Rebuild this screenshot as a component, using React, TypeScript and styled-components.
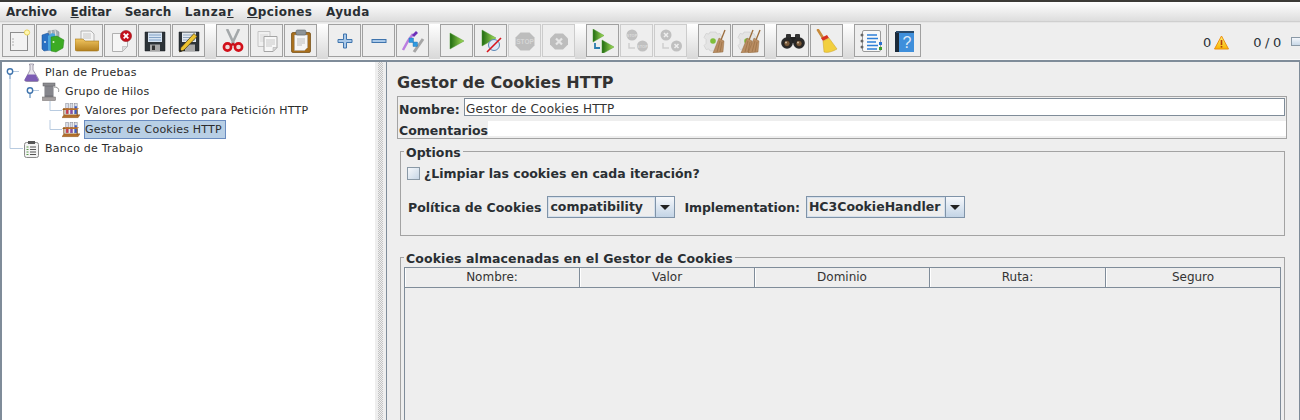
import React from "react";
import styled, { createGlobalStyle } from "styled-components";

const GlobalStyle = createGlobalStyle`
  html, body { margin: 0; padding: 0; background: #eeeeee; }
  body { font-family: "DejaVu Sans", sans-serif; color: #222; overflow: hidden; }
`;

const Page = styled.div`
  width: 1300px;
  height: 420px;
  display: flex;
  flex-direction: column;
  overflow: hidden;
  background: #eeeeee;
`;

const TopStrip = styled.div`
  height: 2px;
  background: #3c3b37;
  flex: none;
`;

const MenuBar = styled.div`
  height: 20px;
  flex: none;
  display: flex;
  align-items: center;
  padding: 1px 0 0 6px;
  gap: 13.5px;
  background: linear-gradient(#ffffff, #dddddd);
  border-bottom: 1px solid #cfcfcf;
  box-sizing: border-box;
  font-weight: 700;
  font-size: 12px;
  color: #2a2f33;
`;

const MenuItem = styled.span<{ $spacing?: number }>`
  letter-spacing: ${(p) => p.$spacing ?? 0}px;
`;

const Mnemonic = styled.span`
  text-decoration: underline;
`;

const ToolBar = styled.div`
  height: 38px;
  flex: none;
  display: flex;
  align-items: flex-start;
  padding: 1px 0 0 2px;
  box-sizing: border-box;
  border-top: 1px solid #e6e6e6;
  border-bottom: 1px solid #f8f8f8;
`;

const ToolGroup = styled.div`
  display: flex;
  gap: 1px;
`;

const ToolSeparator = styled.div`
  width: 11px;
  height: 35px;
  background: linear-gradient(#ffffff, #d8d8d8);
`;

const ToolButton = styled.div<{ $off?: boolean }>`
  width: 33px;
  height: 33px;
  box-sizing: border-box;
  display: flex;
  align-items: center;
  justify-content: center;
  background: #eeeeee;
  border: 1px solid ${(p) => (p.$off ? "#cccccc" : "#a0a0a0")};
`;

const StatusArea = styled.div`
  margin-left: auto;
  display: flex;
  align-items: center;
  height: 37px;
  font-size: 13px;
  color: #2a3138;
`;

const WarnCount = styled.span`
  margin-right: 3px;
`;

const ThreadCount = styled.span`
  margin-left: 24px;
  letter-spacing: -0.3px;
`;

const LogToggle = styled.div`
  width: 10px;
  height: 9px;
  margin-left: 10px;
  margin-right: -1px;
  margin-top: -2px;
  border: 1px solid #8a99a6;
  box-sizing: border-box;
  background: linear-gradient(#f4f7fb, #c8d8e8);
`;

const Workspace = styled.div`
  flex: 1;
  display: flex;
  min-height: 0;
  border-top: 2px solid #7f8c99;
`;

const TreePane = styled.div`
  width: 375px;
  flex: none;
  box-sizing: border-box;
  background: #ffffff;
  border-left: 2px solid #7f8c99;
  padding-top: 1px;
`;

const TreeRow = styled.div`
  height: 19px;
  display: flex;
  align-items: center;
  font-size: 11px;
  color: #2b2b2b;
  letter-spacing: 0.22px;
`;

const TreeLabel = styled.span<{ $selected?: boolean }>`
  height: 19px;
  line-height: 17px;
  box-sizing: border-box;
  padding: ${(p) => (p.$selected ? "0 3px 0 0" : "0 1px")};
  margin-left: ${(p) => (p.$selected ? "4px" : "3px")};
  border: 1px solid ${(p) => (p.$selected ? "#6a8cc0" : "transparent")};
  background: ${(p) => (p.$selected ? "#b8cfe5" : "transparent")};
  white-space: nowrap;
`;

const Splitter = styled.div`
  width: 11px;
  flex: none;
  box-sizing: border-box;
  padding-left: 3px;
  background: #eeeeee;
  &::before {
    content: "";
    display: block;
    width: 5px;
    height: 100%;
    background-image: repeating-conic-gradient(#c4c4c4 0 25%, #eeeeee 0 50%);
    background-size: 2px 2px;
  }
`;

const EditorPane = styled.div`
  flex: 1;
  min-width: 0;
  box-sizing: border-box;
  border-left: 1px solid #7f8c99;
  border-right: 1px solid #7f8c99;
  padding: 0 12px 0 10px;
  background: #eeeeee;
`;

const PaneTitle = styled.div`
  height: 34px;
  padding-top: 11px;
  box-sizing: border-box;
  font-size: 16px;
  line-height: 20px;
  font-weight: 700;
  color: #333333;
`;

const NameBox = styled.div`
  height: 43px;
  box-sizing: border-box;
  border: 1px solid #a3a3a3;
  width: 890px;
`;

const NameRow = styled.div`
  display: flex;
  align-items: center;
  height: 19px;
  padding: 1px 1px 0 1px;
  box-sizing: border-box;
`;

const FieldLabel = styled.span`
  font-size: 12.5px;
  font-weight: 700;
  color: #2a2f33;
  white-space: nowrap;
`;

const NameLabel = styled(FieldLabel)`
  padding-top: 5px;
  width: 65px;
`;

const CommentLabel = styled(FieldLabel)`
  line-height: 19px;
`;

const NameInput = styled.div`
  flex: 1;
  height: 18px;
  box-sizing: border-box;
  background: #ffffff;
  border: 1px solid #7f8c99;
  font-size: 12px;
  letter-spacing: 0.2px;
  line-height: 21px;
  padding-left: 1px;
  color: #333333;
`;

const CommentRow = styled.div`
  display: flex;
  align-items: stretch;
  height: 15px;
  margin-top: 5px;
  padding-left: 1px;
`;

const CommentArea = styled.div`
  flex: 1;
  background: #ffffff;
`;

const FieldGroup = styled.fieldset<{ $height: number; $open?: boolean }>`
  margin: 0 0 0 3px;
  width: 885px;
  height: ${(p) => p.$height}px;
  box-sizing: border-box;
  border: 1px solid #a3a3a3;
  border-bottom-width: ${(p) => (p.$open ? "0" : "1px")};
  padding: 0;
  min-width: 0;
`;

const OptionsGroup = styled(FieldGroup)`
  margin-top: 5px;
`;

const CookiesGroup = styled(FieldGroup)`
  margin-top: 14px;
`;

const Legend = styled.legend<{ $spacing?: number }>`
  margin-left: 3px;
  padding: 2px 2px 0;
  font-size: 12.5px;
  line-height: 13px;
  font-weight: 700;
  color: #2a2f33;
  letter-spacing: ${(p) => p.$spacing ?? 0}px;
`;

const CheckRow = styled.div`
  display: flex;
  align-items: center;
  height: 14px;
  margin: 7px 0 0 6px;
  gap: 4px;
  font-size: 12.5px;
  font-weight: 700;
  color: #2a2f33;
`;

const CheckBox = styled.div`
  width: 13px;
  height: 13px;
  box-sizing: border-box;
  border: 1px solid #8a99a6;
  background: linear-gradient(135deg, #f6f8fb, #c6d6e6);
`;

const ComboRow = styled.div`
  display: flex;
  align-items: center;
  margin: 16px 0 0 7px;
`;

const Combo = styled.div<{ $width: number }>`
  width: ${(p) => p.$width}px;
  height: 22px;
  margin-left: 6px;
  box-sizing: border-box;
  display: flex;
  border: 1px solid #7f93a8;
  background: #eeeeee;
  font-size: 12.5px;
  font-weight: 700;
  color: #2a2f33;
`;

const ComboValue = styled.div`
  flex: 1;
  line-height: 18px;
  padding-left: 1px;
  border: 1px solid #d5e0ec;
  white-space: nowrap;
  overflow: hidden;
`;

const ComboArrow = styled.div`
  width: 19px;
  flex: none;
  box-sizing: border-box;
  border-left: 1px solid #7f93a8;
  background: linear-gradient(#f6f8fb, #c3d4e6);
  display: flex;
  align-items: center;
  justify-content: center;
  &::after {
    content: "";
    border-left: 5px solid transparent;
    border-right: 5px solid transparent;
    border-top: 5px solid #222;
  }
`;

const SecondLabel = styled(FieldLabel)`
  margin-left: 9px;
  letter-spacing: -0.1px;
`;

const CookieTable = styled.div`
  width: 877px;
  height: 200px;
  margin: 2px 0 0 3px;
  box-sizing: border-box;
  border-left: 1px solid #7f8c99;
  border-right: 1px solid #7f8c99;
  border-top: 1px solid #7f8c99;
`;

const TableHead = styled.div`
  display: grid;
  grid-template-columns: 174px 175px 175px 176px 1fr;
  height: 20px;
  box-sizing: border-box;
  border-bottom: 1px solid #7f8c99;
`;

const HeadCell = styled.div`
  text-align: center;
  font-size: 12px;
  line-height: 19px;
  color: #333333;
  box-shadow: inset 1px 0 0 #ffffff;
  & + & {
    border-left: 1px solid #7f8c99;
  }
`;

/* icons */

const Grad = ({ id, from, to, x2 = 0, y2 = 1 }: { id: string; from: string; to: string; x2?: number; y2?: number }) => (
  <linearGradient id={id} x1="0" y1="0" x2={x2} y2={y2}>
    <stop offset="0" stopColor={from} />
    <stop offset="1" stopColor={to} />
  </linearGradient>
);

const Ico = ({ children, size = 24 }: { children: React.ReactNode; size?: number }) => (
  <svg width={size} height={size} viewBox="0 0 24 24">
    {children}
  </svg>
);

const NewIcon = () => (
  <Ico>
    <rect x="3.500" y="3.500" width="17" height="18" fill="#f3f3f3" stroke="#8e8e8e" />
    <circle cx="6" cy="10" r=".7" fill="#999" />
    <circle cx="6" cy="13" r=".7" fill="#999" />
    <circle cx="6" cy="16" r=".7" fill="#999" />
    <circle cx="20" cy="3.500" r="2.600" fill="#fff7b0" stroke="#e8d25a" />
  </Ico>
);

const TemplatesIcon = () => (
  <Ico>
    <path d="M7 2l8-1 3 2v7l-9 1z" fill="#a4aeb5" stroke="#77828a" strokeWidth=".5" />
    <path d="M10 1l1 6M14 1l1 6" stroke="#dfe5e8" strokeWidth="1" />
    <path d="M1 6l6-2 2 3v14l-6 1-2-2z" fill="#2a72c4" stroke="#1c4f90" strokeWidth=".5" />
    <path d="M7 7l4-3 3 1v12l-4 5-3-1z" fill="#49a5dc" />
    <path d="M10 8l6-1 7 4-1 8-7 4-5-1z" fill="#3cab23" stroke="#25801a" strokeWidth=".5" />
    <circle cx="4" cy="13" r="1" fill="#d6e6f5" />
    <circle cx="12.500" cy="13" r="1" fill="#d6f0c8" />
  </Ico>
);

const OpenIcon = () => (
  <Ico>
    <path d="M6 2h10l3 3v9H6z" fill="#f4f4f4" stroke="#9a9a9a" strokeWidth=".7" />
    <path d="M8 5h8M8 7h8M8 9h8" stroke="#b0b0b0" strokeWidth=".7" />
    <path d="M0 10h8l2 2h14v8a2 2 0 0 1-2 2H2a2 2 0 0 1-2-2z" fill="url(#fold)" stroke="#a2751a" strokeWidth=".6" />
    <defs>
      <Grad id="fold" from="#f0c560" to="#b37f1e" />
    </defs>
  </Ico>
);

const CloseIcon = () => (
  <Ico>
    <path d="M3.500 4.500h15v13l-5 5h-10z" fill="#f6f6f6" stroke="#b0b0b0" />
    <path d="M13.500 22.500v-5h5z" fill="#dedede" stroke="#b0b0b0" strokeWidth=".6" />
    <circle cx="17" cy="7" r="5.600" fill="#c4111b" stroke="#8a0c12" strokeWidth=".5" />
    <path d="M14.700 4.700l4.600 4.600M19.300 4.700l-4.600 4.600" stroke="#fff" strokeWidth="1.800" />
  </Ico>
);

const SaveIcon = () => (
  <Ico>
    <path d="M2 3h20v19H2z" fill="#2d3338" stroke="#1b1e21" strokeWidth=".5" />
    <rect x="5" y="3.500" width="14" height="9.500" fill="#d7e4f2" />
    <path d="M6 6h12M6 8.500h12M6 11h12" stroke="#6f93bd" strokeWidth=".8" />
    <rect x="7" y="15.500" width="10" height="6.500" fill="#a8a8a8" />
    <rect x="9" y="16.500" width="3" height="4.500" fill="#333" />
  </Ico>
);

const SaveAsIcon = () => (
  <Ico>
    <path d="M2 3h20v19H2z" fill="#2d3338" stroke="#1b1e21" strokeWidth=".5" />
    <rect x="5" y="3.500" width="14" height="9.500" fill="#e4e9ee" />
    <path d="M6 6h12M6 8.500h12M6 11h12" stroke="#7d97b5" strokeWidth=".8" />
    <rect x="8" y="15.500" width="10" height="6.500" fill="#a8a8a8" />
    <path d="M2.500 23l1.500-4.500L17 4.500l3 3L7 21z" fill="#eec32f" stroke="#3c2f10" strokeWidth=".7" />
    <path d="M2.500 23l.8-2.800 2 2z" fill="#222" />
  </Ico>
);

const CutIcon = () => (
  <Ico>
    <path d="M6 0l7 15M18 0l-7 15" stroke="#a4a8aa" strokeWidth="2.600" />
    <circle cx="6.500" cy="18" r="3.600" fill="#f0d8d8" stroke="#d2101a" strokeWidth="2.600" />
    <circle cx="17.500" cy="18" r="3.600" fill="#f0d8d8" stroke="#d2101a" strokeWidth="2.600" />
    <path d="M9.500 15.500l2.500-2 2.500 2-2.500 1.500z" fill="#c4111b" />
  </Ico>
);

const CopyIcon = () => (
  <Ico>
    <path d="M3 2.500h12v15H3z" fill="#f0f0f0" stroke="#c4c4c4" />
    <path d="M5 6h8M5 8h8M5 10h8M5 12h8" stroke="#d2d2d2" strokeWidth=".8" />
    <path d="M9 7.500h13v11l-4 4H9z" fill="#f7f7f7" stroke="#a5a5a5" />
    <path d="M11 11h9M11 13h9M11 15h9M11 17h6" stroke="#bdbdbd" strokeWidth=".8" />
    <path d="M18 22.500v-4h4z" fill="#d8d8d8" stroke="#a5a5a5" strokeWidth=".5" />
  </Ico>
);

const PasteIcon = () => (
  <Ico>
    <rect x="2.500" y="3.500" width="19" height="20" rx="1.500" fill="#a86f1d" stroke="#70470f" strokeWidth=".7" />
    <path d="M5.500 6h13v12.500l-3 3h-10z" fill="#f6f6f6" stroke="#a9a9a9" strokeWidth=".5" />
    <path d="M8 10h8M8 12h8M8 14h8M8 16h5" stroke="#b0b0b0" strokeWidth=".8" />
    <rect x="7" y="1" width="10" height="5" rx="1.500" fill="#8e9498" stroke="#5d6266" strokeWidth=".6" />
  </Ico>
);

const PlusIcon = () => (
  <Ico>
    <path d="M10.500 5h3v5.500H19v3h-5.500V19h-3v-5.500H5v-3h5.500z" fill="#a9c8e8" stroke="#3f74ad" />
  </Ico>
);

const MinusIcon = () => (
  <Ico>
    <rect x="5" y="10.500" width="14" height="3" fill="#a9c8e8" stroke="#3f74ad" />
  </Ico>
);

const ToggleIcon = () => (
  <Ico>
    <path d="M2 21l5-9 5-7" stroke="#bb7ee0" strokeWidth="2.500" fill="none" />
    <path d="M11 6l4-4 2 2-4 4z" fill="#6c2fb8" />
    <path d="M13 23l9-13" stroke="#a5a5a5" strokeWidth="3" />
    <rect x="8" y="9" width="4.500" height="4.500" fill="#2f9ae0" stroke="#1e6cab" strokeWidth=".4" />
    <rect x="12" y="13" width="4.500" height="4.500" fill="#2f9ae0" stroke="#1e6cab" strokeWidth=".4" />
  </Ico>
);

const RunTriangle = ({ id, d }: { id: string; d: string }) => (
  <>
    <defs>
      <Grad id={id} from="#1f6a10" to="#a8e05a" x2={1} y2={0} />
    </defs>
    <path d={d} fill={`url(#${id})`} stroke="#4f9a30" strokeWidth=".5" />
  </>
);

const StartIcon = () => (
  <Ico>
    <RunTriangle id="run1" d="M5 4l14 8-14 8z" />
  </Ico>
);

const StartNoPauseIcon = () => (
  <Ico>
    <RunTriangle id="run2" d="M3 1l14 8-14 8z" />
    <circle cx="15" cy="16" r="5.500" fill="#dce8f5" stroke="#5b86b5" />
    <path d="M8 23L22 9" stroke="#d8141c" strokeWidth="1.600" />
  </Ico>
);

const StopIcon = () => (
  <Ico>
    <path d="M7.500 3.500h9l5 5v8l-5 5h-9l-5-5v-8z" fill="#bdbdbd" />
    <text x="12" y="15" fontSize="6.500" fontWeight="700" textAnchor="middle" fill="#d6d6d6" fontFamily="Liberation Sans">STOP</text>
  </Ico>
);

const ShutdownIcon = () => (
  <Ico>
    <path d="M8 4.500h8l5 5v6l-5 5H8l-5-5v-6z" fill="#bdbdbd" />
    <path d="M9 9.500l6 6M15 9.500l-6 6" stroke="#e6e6e6" strokeWidth="2.200" />
  </Ico>
);

const RemoteStartIcon = () => (
  <Ico>
    <RunTriangle id="run3" d="M2 0l11 6.500L2 13z" />
    <RunTriangle id="run4" d="M11 11l12 7-12 7z" />
    <path d="M4 14v5h5" stroke="#2a7cb0" strokeWidth="1.800" fill="none" />
  </Ico>
);

const RemoteStopIcon = () => (
  <Ico>
    <circle cx="7" cy="6" r="5.500" fill="#c0c0c0" />
    <text x="7" y="7.500" fontSize="4" fontWeight="700" textAnchor="middle" fill="#dcdcdc" fontFamily="Liberation Sans">STOP</text>
    <circle cx="17.500" cy="17" r="5.500" fill="#c0c0c0" />
    <text x="17.500" y="18.500" fontSize="4" fontWeight="700" textAnchor="middle" fill="#dcdcdc" fontFamily="Liberation Sans">STOP</text>
    <path d="M4 14v5h6" stroke="#cfcfcf" strokeWidth="1.500" fill="none" />
  </Ico>
);

const RemoteShutdownIcon = () => (
  <Ico>
    <circle cx="7" cy="6" r="5.500" fill="#c0c0c0" />
    <path d="M5 4l4 4M9 4l-4 4" stroke="#eee" strokeWidth="1.500" />
    <circle cx="17.500" cy="17" r="5.500" fill="#c0c0c0" />
    <path d="M15.500 15l4 4M19.500 15l-4 4" stroke="#eee" strokeWidth="1.500" />
    <path d="M4 14v5h6" stroke="#cfcfcf" strokeWidth="1.500" fill="none" />
  </Ico>
);

const Gear = () => (
  <>
    <path d="M7 3h6l1 2 3-.5 2 4-2 2v4l2 2-2 4-3-.5-1 2H7l-1-2-3 .5-2-4 2-2v-4L1 8.500l2-4 3 .5z" fill="#e4e4e4" stroke="#c4c4c4" strokeWidth=".5" />
    <circle cx="10" cy="12" r="2.800" fill="#7fbf3a" />
  </>
);

const Broom = ({ x }: { x: number }) => (
  <g transform={`translate(${x} 0)`}>
    <path d="M22 1l-4 10" stroke="#9a6a3a" strokeWidth="1.300" />
    <path d="M16 9l5 3-1 11-10 1z" fill="#b98d62" stroke="#8c6238" strokeWidth=".4" />
    <path d="M17 12l-3 11M19 13l-2 10" stroke="#8c6238" strokeWidth=".5" />
  </g>
);

const ClearIcon = () => (
  <Ico>
    <Gear />
    <Broom x={0} />
  </Ico>
);

const ClearAllIcon = () => (
  <Ico>
    <Gear />
    <Broom x={-6} />
    <Broom x={1} />
  </Ico>
);

const BinocularsIcon = () => (
  <Ico>
    <rect x="5" y="5" width="5" height="6" rx="1" fill="#333" />
    <rect x="14" y="5" width="5" height="6" rx="1" fill="#333" />
    <rect x="9" y="8" width="6" height="6" fill="#222" />
    <circle cx="6" cy="14" r="5.800" fill="#2a2a2a" />
    <circle cx="18" cy="14" r="5.800" fill="#2a2a2a" />
    <circle cx="6" cy="14.500" r="3" fill="#7a5a3a" stroke="#111" strokeWidth=".5" />
    <circle cx="18" cy="14.500" r="3" fill="#7a5a3a" stroke="#111" strokeWidth=".5" />
    <circle cx="5" cy="13.500" r=".9" fill="#d8c8b0" />
    <circle cx="17" cy="13.500" r=".9" fill="#d8c8b0" />
  </Ico>
);

const BroomIcon = () => (
  <Ico>
    <path d="M3 1l5 8" stroke="#c98b3a" strokeWidth="2.600" strokeLinecap="round" />
    <path d="M6 9l6-3 2 3-6 3z" fill="#d8301f" />
    <path d="M8 12l6-3 8 11c-5 3-10 4-13 3z" fill="#f2cf3f" stroke="#c8a12a" strokeWidth=".5" />
  </Ico>
);

const FunctionIcon = () => (
  <Ico>
    <rect x="3.500" y="1.500" width="18" height="21" rx="1.500" fill="#f8f8f8" stroke="#9a9a9a" />
    <path d="M8 6h10M8 9.500h11M8 13h9M8 16.500h11M8 20h10" stroke="#2e7fd8" strokeWidth="1.300" />
    <circle cx="3" cy="6" r="1.500" fill="#666" />
    <circle cx="3" cy="12" r="1.500" fill="#666" />
    <circle cx="3" cy="18" r="1.500" fill="#666" />
    <rect x="20" y="13" width="3" height="3" fill="#2a6fd0" />
    <rect x="20" y="18" width="3" height="3" fill="#3a9a2a" />
  </Ico>
);

const HelpIcon = () => (
  <Ico>
    <path d="M2 3h19v20H2z" fill="#3f8fdb" />
    <path d="M2 3h4v20H2z" fill="#1b2a3a" />
    <path d="M3 2h18v2H3z" fill="#2a4a6a" />
    <text x="14" y="19" fontSize="16" textAnchor="middle" fill="#dce9f7" fontFamily="Liberation Sans">?</text>
  </Ico>
);

const WarnIcon = () => (
  <svg width="15" height="15" viewBox="0 0 15 15">
    <defs>
      <Grad id="warn" from="#fff27a" to="#f7b500" />
    </defs>
    <path d="M7.500 1L14.500 14H.5z" fill="url(#warn)" stroke="#ec8f10" strokeWidth="1" />
    <rect x="6.700" y="5" width="1.600" height="5" fill="#b4400c" />
    <rect x="6.700" y="11" width="1.600" height="1.600" fill="#b4400c" />
  </svg>
);

const FlaskIcon = () => (
  <svg width="17" height="19" viewBox="0 0 17 19">
    <path d="M6.500 1h4v1h-.5v5l5.500 9c.5 1.500 0 2.500-1 2.500h-11c-1.500 0-2-1-1-2.500L7 7V2h-.5z" fill="#e8e6ec" stroke="#8c8798" strokeWidth=".8" />
    <path d="M4.500 11.500h8l2.500 4.500c.5 1.500 0 2.300-1 2.300H3c-1.500 0-2-1-1-2.500z" fill="#7c5cb4" />
  </svg>
);

const SpoolIcon = () => (
  <svg width="18" height="19" viewBox="0 0 18 19">
    <path d="M12 5c5 0 5 3 4.500 5" stroke="#8a8a8a" strokeWidth="1" fill="none" />
    <rect x="1" y="1" width="12" height="3" fill="#8c8c90" stroke="#5d5d60" strokeWidth=".5" />
    <rect x="2.500" y="4" width="9" height="11" fill="#7a7a80" />
    <path d="M3 6h8M3 8h8M3 10h8M3 12h8" stroke="#a4a4a8" strokeWidth=".6" />
    <rect x="0.500" y="15" width="13" height="3.500" fill="#a5a0a0" stroke="#6c6868" strokeWidth=".5" />
  </svg>
);

const RackIcon = () => (
  <svg width="18" height="18" viewBox="0 0 19 18">
    <rect x="4" y="1" width="3" height="11" fill="#d9dde8" stroke="#7c7f8a" strokeWidth=".5" />
    <rect x="8.500" y="1" width="3" height="11" fill="#d9dde8" stroke="#7c7f8a" strokeWidth=".5" />
    <rect x="13" y="1" width="3" height="11" fill="#d9dde8" stroke="#7c7f8a" strokeWidth=".5" />
    <rect x="4.300" y="6" width="2.400" height="6" fill="#c83a4a" />
    <rect x="8.800" y="6" width="2.400" height="6" fill="#8a4aa0" />
    <rect x="13.300" y="4" width="2.400" height="8" fill="#3a5ac8" />
    <path d="M2 6h16L16 8H0z" fill="#b5702a" />
    <path d="M2 13h17l-2 3H0z" fill="#b5702a" stroke="#7c4a16" strokeWidth=".4" />
    <path d="M2 6v7M16 8v6" stroke="#7c4a16" strokeWidth="1" />
  </svg>
);

const BenchIcon = () => (
  <svg width="17" height="18" viewBox="0 0 17 18">
    <rect x="1.500" y="2.500" width="14" height="15" rx="2" fill="#f3f3f3" stroke="#8a8a8a" />
    <rect x="5" y="1" width="7" height="3" fill="#555" />
    <path d="M7 7h6M7 9.500h6M7 12h6M7 14.500h6" stroke="#555" strokeWidth="1" />
    <path d="M3.500 7h2M3.500 9.500h2M3.500 12h2M3.500 14.500h2" stroke="#5a9a4a" strokeWidth="1" />
  </svg>
);

const GUIDE = "#b8cbe0";

const Handle = ({ x }: { x: number }) => (
  <>
    <line x1={x} y1="8.500" x2={x + 9} y2="8.500" stroke={GUIDE} />
    <line x1={x} y1="9.500" x2={x} y2="16" stroke="#3f74ad" />
    <circle cx={x} cy="8.500" r="2.700" fill="#fff" stroke="#3f74ad" strokeWidth="1.400" />
  </>
);

const Rail = ({ x, tick, to = 19 }: { x: number; tick?: number; to?: number }) => (
  <>
    <line x1={x} y1="0" x2={x} y2={tick ? 9.5 : to} stroke={GUIDE} />
    {tick ? <line x1={x} y1="9.500" x2={tick} y2="9.500" stroke={GUIDE} /> : null}
  </>
);

const Guides = ({ width, children }: { width: number; children: React.ReactNode }) => (
  <svg width={width} height="19" viewBox={`0 0 ${width} 19`} style={{ flex: "none" }}>
    {children}
  </svg>
);

type Tool = { icon: React.ReactNode; off?: boolean };

const toolGroups: Tool[][] = [
  [
    { icon: <NewIcon /> },
    { icon: <TemplatesIcon /> },
    { icon: <OpenIcon /> },
    { icon: <CloseIcon /> },
    { icon: <SaveIcon /> },
    { icon: <SaveAsIcon /> },
  ],
  [{ icon: <CutIcon /> }, { icon: <CopyIcon /> }, { icon: <PasteIcon /> }],
  [{ icon: <PlusIcon /> }, { icon: <MinusIcon /> }, { icon: <ToggleIcon /> }],
  [
    { icon: <StartIcon /> },
    { icon: <StartNoPauseIcon /> },
    { icon: <StopIcon />, off: true },
    { icon: <ShutdownIcon />, off: true },
  ],
  [
    { icon: <RemoteStartIcon /> },
    { icon: <RemoteStopIcon />, off: true },
    { icon: <RemoteShutdownIcon />, off: true },
  ],
  [{ icon: <ClearIcon /> }, { icon: <ClearAllIcon /> }],
  [{ icon: <BinocularsIcon /> }, { icon: <BroomIcon /> }],
  [{ icon: <FunctionIcon /> }, { icon: <HelpIcon /> }],
];

const columns = ["Nombre:", "Valor", "Dominio", "Ruta:", "Seguro"];

export default function App() {
  return (
    <Page>
      <GlobalStyle />
      <TopStrip />
      <MenuBar>
        <MenuItem>Archivo</MenuItem>
        <MenuItem>
          <Mnemonic>E</Mnemonic>ditar
        </MenuItem>
        <MenuItem>Search</MenuItem>
        <MenuItem $spacing={0.6}>
          Lanza<Mnemonic>r</Mnemonic>
        </MenuItem>
        <MenuItem $spacing={0.4}>
          <Mnemonic>O</Mnemonic>pciones
        </MenuItem>
        <MenuItem $spacing={0.4}>Ayuda</MenuItem>
      </MenuBar>
      <ToolBar>
        {toolGroups.map((group, i) => (
          <React.Fragment key={i}>
            {i > 0 && <ToolSeparator />}
            <ToolGroup>
              {group.map((tool, j) => (
                <ToolButton key={j} $off={tool.off}>
                  {tool.icon}
                </ToolButton>
              ))}
            </ToolGroup>
          </React.Fragment>
        ))}
        <StatusArea>
          <WarnCount>0</WarnCount>
          <WarnIcon />
          <ThreadCount>0 / 0</ThreadCount>
          <LogToggle />
        </StatusArea>
      </ToolBar>
      <Workspace>
        <TreePane>
          <TreeRow>
            <Guides width={21}>
              <Handle x={8} />
              <line x1="8" y1="12" x2="8" y2="19" stroke={GUIDE} />
            </Guides>
            <FlaskIcon />
            <TreeLabel>Plan de Pruebas</TreeLabel>
          </TreeRow>
          <TreeRow>
            <Guides width={40}>
              <Rail x={8} />
              <Handle x={28} />
            </Guides>
            <SpoolIcon />
            <TreeLabel>Grupo de Hilos</TreeLabel>
          </TreeRow>
          <TreeRow>
            <Guides width={60}>
              <Rail x={8} />
              <Rail x={48} tick={60} />
            </Guides>
            <RackIcon />
            <TreeLabel>Valores por Defecto para Petición HTTP</TreeLabel>
          </TreeRow>
          <TreeRow>
            <Guides width={60}>
              <Rail x={8} />
              <Rail x={48} tick={60} />
            </Guides>
            <RackIcon />
            <TreeLabel $selected>Gestor de Cookies HTTP</TreeLabel>
          </TreeRow>
          <TreeRow>
            <Guides width={21}>
              <Rail x={8} tick={21} />
            </Guides>
            <BenchIcon />
            <TreeLabel>Banco de Trabajo</TreeLabel>
          </TreeRow>
        </TreePane>
        <Splitter />
        <EditorPane>
          <PaneTitle>Gestor de Cookies HTTP</PaneTitle>
          <NameBox>
            <NameRow>
              <NameLabel>Nombre:</NameLabel>
              <NameInput>Gestor de Cookies HTTP</NameInput>
            </NameRow>
            <CommentRow>
              <CommentLabel>Comentarios</CommentLabel>
              <CommentArea />
            </CommentRow>
          </NameBox>
          <OptionsGroup $height={92}>
            <Legend>Options</Legend>
            <CheckRow>
              <CheckBox />
              ¿Limpiar las cookies en cada iteración?
            </CheckRow>
            <ComboRow>
              <FieldLabel>Política de Cookies</FieldLabel>
              <Combo $width={128}>
                <ComboValue>compatibility</ComboValue>
                <ComboArrow />
              </Combo>
              <SecondLabel>Implementation:</SecondLabel>
              <Combo $width={159}>
                <ComboValue>HC3CookieHandler</ComboValue>
                <ComboArrow />
              </Combo>
            </ComboRow>
          </OptionsGroup>
          <CookiesGroup $height={180} $open>
            <Legend $spacing={0.1}>Cookies almacenadas en el Gestor de Cookies</Legend>
            <CookieTable>
              <TableHead>
                {columns.map((c) => (
                  <HeadCell key={c}>{c}</HeadCell>
                ))}
              </TableHead>
            </CookieTable>
          </CookiesGroup>
        </EditorPane>
      </Workspace>
    </Page>
  );
}
